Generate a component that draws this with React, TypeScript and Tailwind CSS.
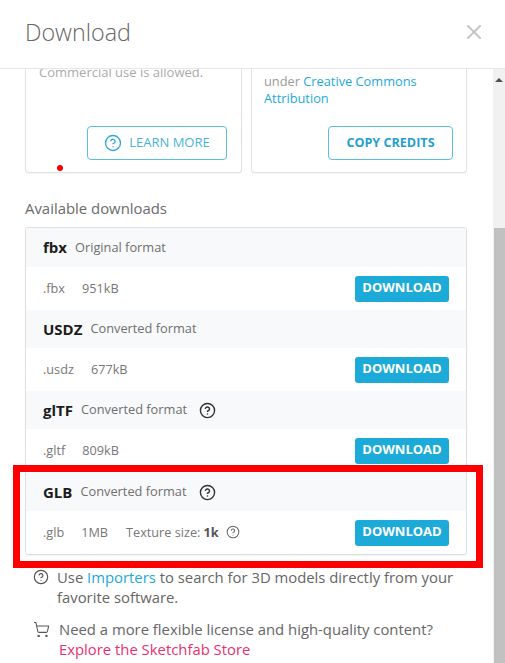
import { X, CircleHelp, ShoppingCart } from "lucide-react";

const font = { fontFamily: '"Open Sans", sans-serif' };

function DownloadButton() {
  return (
    <button className="w-[94px] h-[26px] rounded-[3px] bg-[#1caad9] text-white text-[13px] font-bold leading-[22px] pb-[4px]">
      DOWNLOAD
    </button>
  );
}

function FormatRow({
  name,
  label,
  ext,
  size,
  help,
  extra,
  headH,
  rowH,
}: {
  name: string;
  label: string;
  ext: string;
  size: string;
  help?: boolean;
  extra?: boolean;
  headH: string;
  rowH: string;
}) {
  return (
    <div>
      <div className={`${headH} bg-[#f8f9fb] flex items-center pl-[17px]`}>
        <span className="text-[15px] font-bold text-[#1d1d1d] mr-[8px]">{name}</span>
        <span className="text-[12.8px] text-[#6f6f6f]">{label}</span>
        {help && <CircleHelp className="w-[17px] h-[17px] ml-[12px] text-[#333]" strokeWidth={2} />}
      </div>
      <div className={`${rowH} bg-white flex items-center justify-between pl-[17px] pr-[17px]`}>
        <div className="flex items-center text-[12.7px] text-[#777]">
          <span className="mr-[17px]">{ext}</span>
          <span>{size}</span>
          {extra && (
            <>
              <span className="ml-[18px]">Texture size:</span>
              <span className="ml-[3px] font-bold text-[#555]">1k</span>
              <CircleHelp className="w-[14px] h-[14px] ml-[7px] text-[#666]" strokeWidth={1.75} />
            </>
          )}
        </div>
        <DownloadButton />
      </div>
    </div>
  );
}

export default function App() {
  return (
    <div className="relative w-[505px] h-[663px] bg-white overflow-hidden flex flex-col" style={font}>
      <header className="h-[69px] shrink-0 border-b border-[#e6e6e6] flex items-start justify-between pl-[25px] pr-[19px] pt-[14px]">
        <h1 className="text-[23.3px] font-light text-[#666] leading-[36px]">Download</h1>
        <X className="w-[24px] h-[24px] mt-[6px] text-[#c4c4c4]" strokeWidth={2} />
      </header>

      <div className="flex flex-1 min-h-0">
        <main className="w-[493px] shrink-0 pl-[25px] pr-[26px] overflow-hidden">
          <div className="flex gap-[9px]">
            <div className="w-[218px] h-[104px] bg-white border-x border-b border-[#e2e2e2] rounded-b-[4px] shadow-[0_1px_1px_rgba(0,0,0,0.05)] flex flex-col justify-between pl-[13px] pr-[14px] pb-[12px]">
              <p className="text-[13px] leading-[17px] text-[#aaa] -mt-[5px]">Commercial use is allowed.</p>
              <button className="self-end w-[140px] h-[34px] border border-[#5dbde0] rounded-[4px] flex items-center justify-center gap-[7px] text-[13px] text-[#49b3dc]">
                <CircleHelp className="w-[18px] h-[18px] text-[#2ea7d6]" strokeWidth={1.75} />
                LEARN MORE
              </button>
            </div>
            <div className="w-[217px] h-[104px] bg-white border-x border-b border-[#e2e2e2] rounded-b-[4px] shadow-[0_1px_1px_rgba(0,0,0,0.05)] flex flex-col justify-between pl-[12px] pr-[13px] pb-[12px]">
              <p className="text-[12.8px] leading-[17px] text-[#999] mt-[4px]">
                under <span className="text-[#1caad9]">Creative Commons Attribution</span>
              </p>
              <button className="self-end w-[125px] h-[34px] border border-[#5dbde0] rounded-[4px] text-[12.6px] font-bold text-[#1f9fd0]">
                COPY CREDITS
              </button>
            </div>
          </div>

          <h2 className="mt-[25px] text-[14.9px] leading-[20px] text-[#6b6b6b]">Available downloads</h2>

          <div className="mt-[9px] w-[442px] border border-[#dedede] rounded-[3px] shadow-[0_1px_1px_rgba(0,0,0,0.05)] overflow-hidden">
            <FormatRow name="fbx" label="Original format" ext=".fbx" size="951kB" headH="h-[39px]" rowH="h-[43px]" />
            <FormatRow name="USDZ" label="Converted format" ext=".usdz" size="677kB" headH="h-[38px]" rowH="h-[43px]" />
            <FormatRow name="glTF" label="Converted format" ext=".gltf" size="809kB" help headH="h-[38px]" rowH="h-[44px]" />
            <FormatRow name="GLB" label="Converted format" ext=".glb" size="1MB" help extra headH="h-[38px]" rowH="h-[43px]" />
          </div>

          <div className="mt-[12px] ml-[8px] flex gap-[8px] text-[14.85px] leading-[20px] text-[#666]">
            <CircleHelp className="w-[16px] h-[16px] mt-[2px] shrink-0 text-[#555]" strokeWidth={1.75} />
            <p>
              Use <span className="text-[#1caad9]">Importers</span> to search for 3D models directly from your favorite
              software.
            </p>
          </div>
          <div className="mt-[12px] ml-[8px] flex gap-[9px] text-[14.85px] leading-[20px] text-[#666]">
            <ShoppingCart className="w-[17px] h-[17px] mt-[2px] shrink-0 text-[#555]" strokeWidth={1.5} />
            <p>
              Need a more flexible license and high-quality content?{" "}
              <span className="text-[#e9316f]">Explore the Sketchfab Store</span>
            </p>
          </div>
        </main>

        <div className="w-[12px] ml-auto bg-[#f1f1f1] flex flex-col">
          <div className="h-[159px] shrink-0 pt-[9px] flex justify-center">
            <div className="w-0 h-0 border-x-[4px] border-x-transparent border-b-[4px] border-b-[#505050]" />
          </div>
          <div className="flex-1 ml-[1px] bg-[#c1c1c1]" />
        </div>
      </div>

      {/* annotations drawn over the screenshot */}
      <div className="absolute left-[13px] top-[465px] w-[470px] h-[103px] border-[7px] border-[#ff0000]" />
      <div className="absolute left-[57px] top-[165px] w-[6px] h-[6px] rounded-full bg-[#ff0000]" />
    </div>
  );
}
